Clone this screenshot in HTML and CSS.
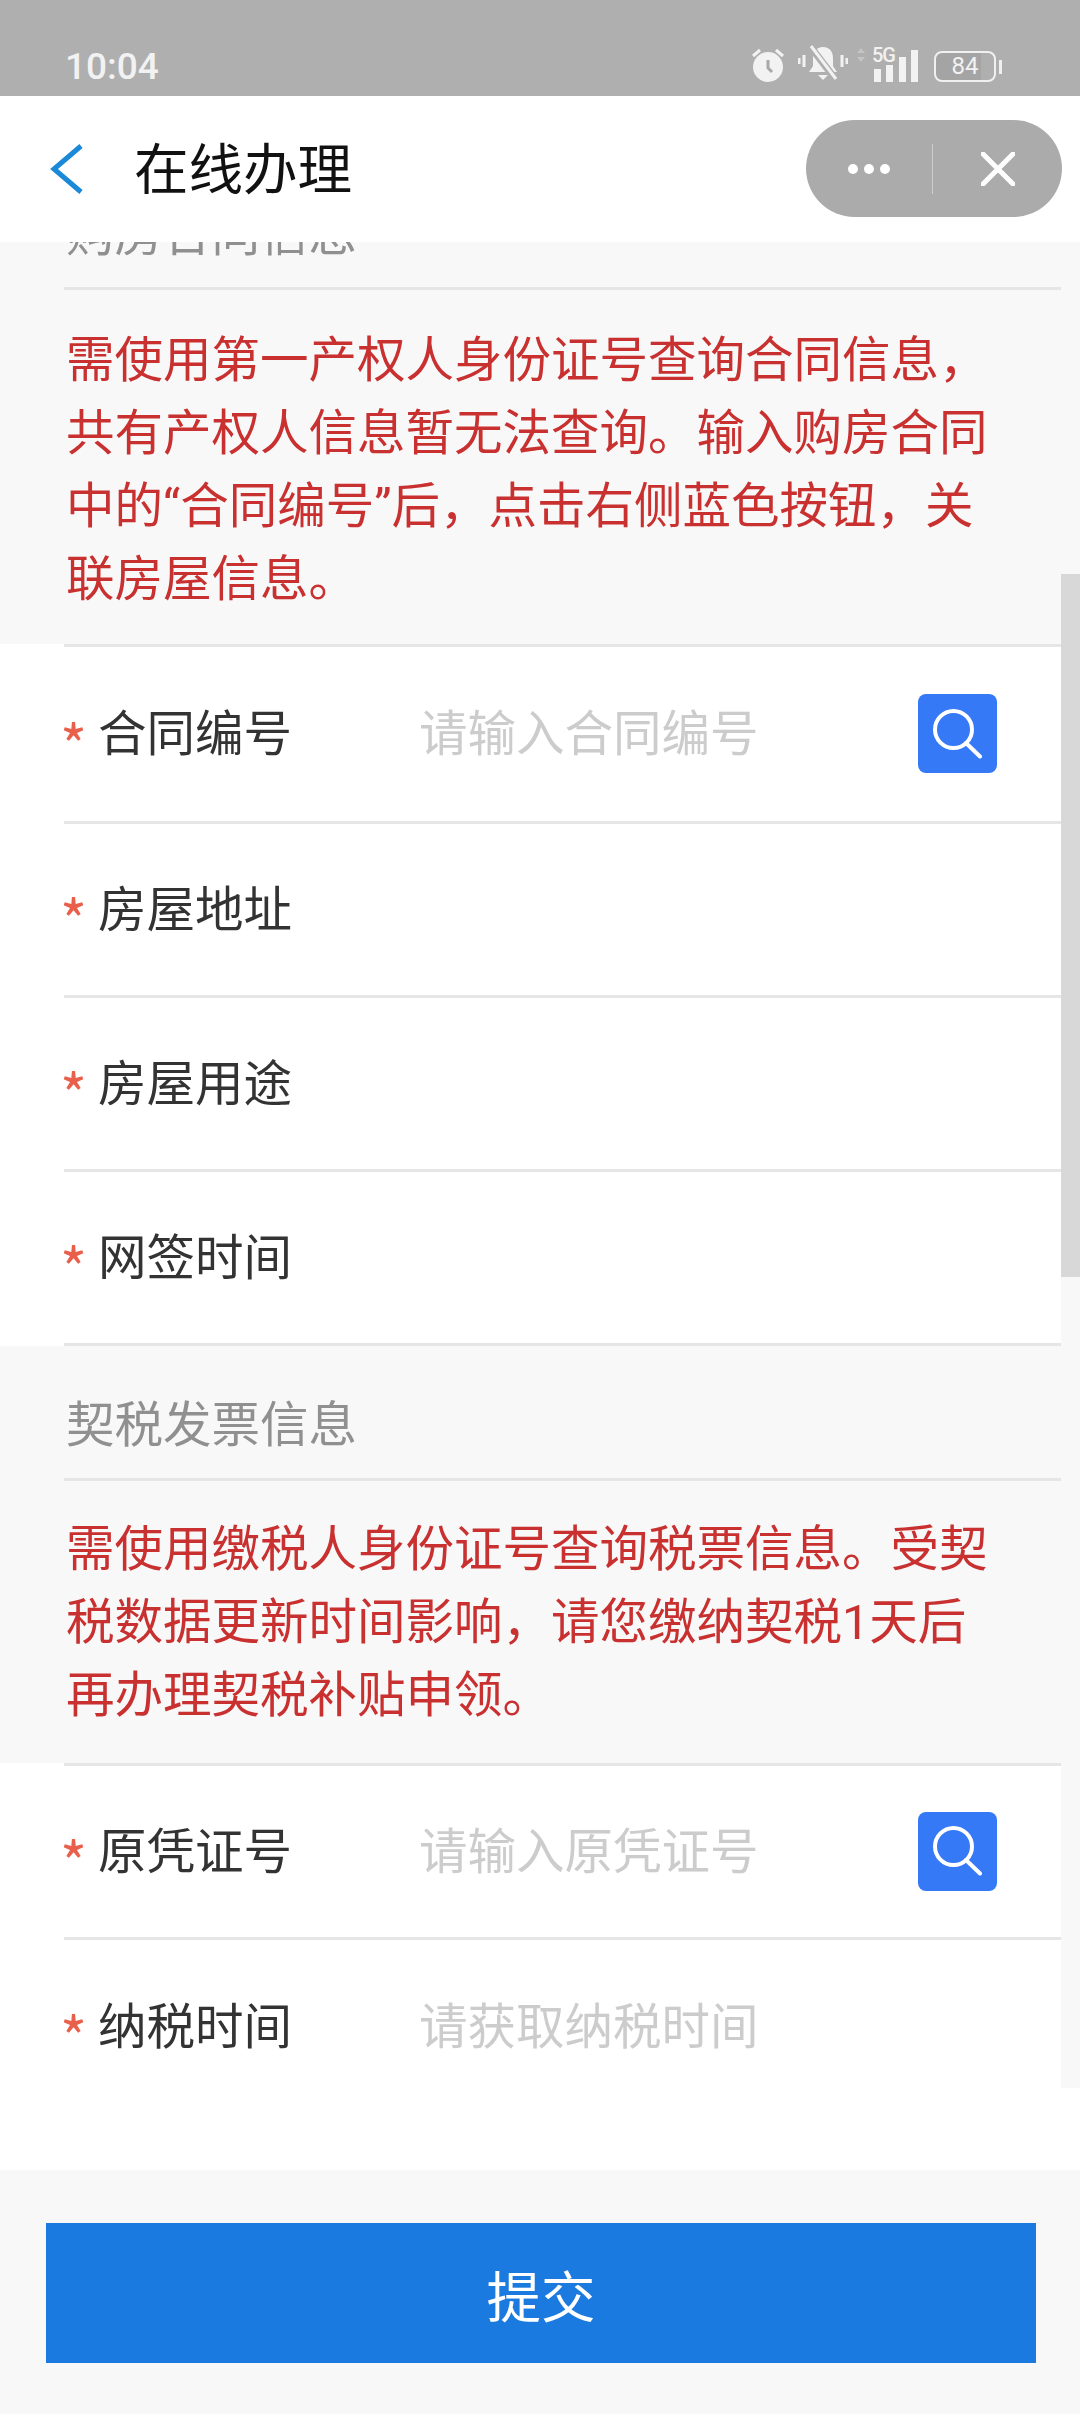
FILE: index.html
```html
<!DOCTYPE html>
<html>
<head>
<meta charset="UTF-8">
<title>在线办理</title>
<link rel="stylesheet" href="styles.css">
</head>
<body>

<div class="statusBar">
	<span class="clock">10:04</span>
	<div class="statusIcons">
		<svg class="alarmIcon" width="34" height="34" viewBox="0 0 34 34">
			<circle cx="17" cy="19" r="15" fill="#f2f2f2"/>
			<path d="M17 12v8l4 4" fill="none" stroke="#a8a8a8" stroke-width="3"/>
			<path d="M2 8l7-6M32 8l-7-6" fill="none" stroke="#f2f2f2" stroke-width="3"/>
		</svg>
		<svg class="bellIcon" width="50" height="38" viewBox="0 0 50 38">
			<path d="M25 3c7 0 10 5 10 11v8l4 6H11l4-6v-8c0-6 3-11 10-11z" fill="#f2f2f2"/>
			<path d="M20 31h10l-5 5z" fill="#f2f2f2"/>
			<path d="M12 2l26 34" stroke="#afafaf" stroke-width="7"/>
			<path d="M13 2l25 33" stroke="#f2f2f2" stroke-width="3"/>
			<path d="M1 14v6M6 11v12M44 11v12M49 14v6" stroke="#f2f2f2" stroke-width="3"/>
		</svg>
		<div class="signal">
			<svg class="dataArrows" width="8" height="14" viewBox="0 0 8 14">
				<path d="M4 0l4 5H0zM4 14l4-5H0z" fill="#c4c4c4"/>
			</svg>
			<span class="netLabel">5G</span>
			<svg width="44" height="32" viewBox="0 0 44 32">
				<rect x="0" y="19" width="7" height="13" fill="#f2f2f2"/>
				<rect x="12" y="15" width="7" height="17" fill="#f2f2f2"/>
				<rect x="25" y="7" width="7" height="25" fill="#f2f2f2"/>
				<rect x="37" y="0" width="7" height="32" fill="#f2f2f2"/>
			</svg>
		</div>
		<div class="battery"><span>84</span></div>
		<i class="batteryTip"></i>
	</div>
</div>

<div class="navBar">
	<svg class="backIcon" width="34" height="50" viewBox="0 0 34 50">
		<path d="M31 2L4 25l27 23" fill="none" stroke="#1a8ad8" stroke-width="5"/>
	</svg>
	<h1 class="navTitle">在线办理</h1>
	<div class="capsule">
		<div class="capsuleDots"><i></i><i></i><i></i></div>
		<div class="capsuleLine"></div>
		<svg width="34" height="34" viewBox="0 0 34 34">
			<path d="M2 2l30 30M32 2L2 32" stroke="#fff" stroke-width="5" stroke-linecap="round"/>
		</svg>
	</div>
</div>

<div class="content">
	<div class="scrollTrack"></div>
	<div class="scrollThumb"></div>

	<div class="sectionHead cut">
		<h2>购房合同信息</h2>
	</div>
	<div class="notice first">
		<p>需使用第一产权人身份证号查询合同信息，</p>
		<p>共有产权人信息暂无法查询。输入购房合同</p>
		<p>中的“合同编号”后，点击右侧蓝色按钮，关</p>
		<p>联房屋信息。</p>
	</div>

	<div class="rows closed">
		<div class="row tall">
			<span class="star">*</span><span class="label">合同编号</span>
			<span class="hint">请输入合同编号</span>
			<a class="searchBtn">
				<svg width="50" height="50" viewBox="0 0 50 50">
					<circle cx="20.5" cy="20.5" r="18.5" fill="none" stroke="#fff" stroke-width="4"/>
					<path d="M33 34l14 13.500" stroke="#fff" stroke-width="4" stroke-linecap="round"/>
				</svg>
			</a>
		</div>
		<div class="row"><span class="star">*</span><span class="label">房屋地址</span></div>
		<div class="row"><span class="star">*</span><span class="label">房屋用途</span></div>
		<div class="row"><span class="star">*</span><span class="label">网签时间</span></div>
	</div>

	<div class="sectionHead">
		<h2>契税发票信息</h2>
	</div>
	<div class="notice">
		<p>需使用缴税人身份证号查询税票信息。受契</p>
		<p>税数据更新时间影响，请您缴纳契税1天后</p>
		<p>再办理契税补贴申领。</p>
	</div>

	<div class="rows">
		<div class="row">
			<span class="star">*</span><span class="label">原凭证号</span>
			<span class="hint">请输入原凭证号</span>
			<a class="searchBtn">
				<svg width="50" height="50" viewBox="0 0 50 50">
					<circle cx="20.5" cy="20.5" r="18.5" fill="none" stroke="#fff" stroke-width="4"/>
					<path d="M33 34l14 13.500" stroke="#fff" stroke-width="4" stroke-linecap="round"/>
				</svg>
			</a>
		</div>
		<div class="row lastRow">
			<span class="star">*</span><span class="label">纳税时间</span>
			<span class="hint">请获取纳税时间</span>
		</div>
	</div>
</div>

<div class="footer">
	<div class="submitBtn">提交</div>
</div>

</body>
</html>
```

FILE: styles.css
```css
* {
  box-sizing: border-box;
}
html, body {
  margin: 0;
  height: 2414px;
  overflow: hidden;
}
body {
  background-color: #f8f8f8;
  font-family: "Noto Sans CJK SC", "Noto Sans", sans-serif;
}
h1, h2, p {
  margin: 0;
  font-weight: 400;
}

/* top grey status bar */
.statusBar {
  height: 96px;
  background-color: #afafaf;
  display: flex;
  justify-content: space-between;
  align-items: flex-end;
  padding: 0 78px 14px 65px;
  color: #f2f2f2;
}
.clock {
  font-family: Roboto, sans-serif;
  font-size: 37px;
  font-weight: 500;
  line-height: 42px;
  margin-bottom: -6px;
}
.statusIcons {
  display: flex;
  align-items: flex-end;
  height: 50px;
}
.alarmIcon {
  margin: 0 13px 0 0;
}
.bellIcon {
  margin: 0 26px 0 0;
}
.signal {
  position: relative;
  width: 44px;
  height: 50px;
  margin-right: 16px;
  display: flex;
  align-items: flex-end;
}
.dataArrows {
  position: absolute;
  left: -17px;
  top: 16px;
}
.netLabel {
  position: absolute;
  left: -2px;
  top: 11px;
  font-family: Roboto, sans-serif;
  font-size: 20px;
  font-weight: 500;
  line-height: 24px;
  letter-spacing: -1px;
}
.battery {
  width: 62px;
  height: 31px;
  border: 2px solid #f0f0f0;
  border-radius: 8px;
  text-align: center;
  font-family: Roboto, sans-serif;
  font-size: 24px;
  line-height: 27px;
  background: linear-gradient(to right, #a4a4a4 78%, transparent 78%);
}
.batteryTip {
  width: 3px;
  height: 14px;
  margin: 0 0 8px 3px;
  background-color: #f0f0f0;
}

/* white title bar */
.navBar {
  height: 146px;
  background-color: #fff;
  display: flex;
  align-items: center;
  position: relative;
  z-index: 2;
}
.backIcon {
  margin-left: 50px;
}
.navTitle {
  margin: 0 0 6px 50px;
  font-size: 54.500px;
  line-height: 70px;
  color: #111;
}
.capsule {
  position: absolute;
  left: 806px;
  top: 24px;
  width: 256px;
  height: 97px;
  border-radius: 49px;
  background-color: #ababab;
  display: flex;
  align-items: center;
}
.capsuleDots {
  display: flex;
  gap: 6px;
  margin-left: 42px;
}
.capsuleDots i {
  width: 10px;
  height: 10px;
  border-radius: 50%;
  background-color: #fff;
}
.capsuleLine {
  width: 1px;
  height: 50px;
  margin-left: 42px;
  background-color: #ccc;
}
.capsule svg {
  margin-left: 48px;
}

/* scrolled form */
.content {
  position: relative;
  height: 1928px;
  overflow: hidden;
}
.scrollTrack {
  position: absolute;
  right: 0;
  top: 0;
  width: 19px;
  height: 1846px;
  background-color: #f8f8f8;
  z-index: 1;
}
.scrollThumb {
  position: absolute;
  right: 0;
  top: 332px;
  width: 19px;
  height: 703px;
  background-color: #d8d8d8;
  z-index: 1;
}
.sectionHead {
  height: 135px;
  margin-left: 64px;
  margin-right: 19px;
  border-bottom: 3px solid #e6e6e6;
  display: flex;
  align-items: flex-end;
  padding-bottom: 25px;
}
.sectionHead.cut {
  height: 48px;
}
.sectionHead h2 {
  font-size: 48.500px;
  line-height: 64px;
  color: #909090;
  margin-left: 2px;
}
.notice {
  padding: 32px 0 31px 66px;
  color: #c93030;
  font-family: Roboto, "Noto Sans CJK SC", sans-serif;
  font-size: 48.500px;
  line-height: 73px;
}
.notice.first {
  padding: 34px 0 28px 66px;
}
.notice p {
  white-space: nowrap;
}
.rows {
  background-color: #fff;
  padding-left: 64px;
}
.rows.closed .row:last-child {
  height: 177px;
  border-bottom: 3px solid #e6e6e6;
}
.row {
  height: 174px;
  margin-right: 19px;
  border-top: 3px solid #e6e6e6;
  display: flex;
  align-items: center;
}
.row.tall {
  height: 177px;
}
.row.lastRow {
  height: 234px;
  padding-bottom: 58px;
}
.star {
  width: 38px;
  font-size: 58px;
  line-height: 48px;
  color: #e8604c;
  margin-left: -4px;
  padding-top: 17px;
}
.label {
  width: 321px;
  font-size: 48.500px;
  line-height: 64px;
  color: #333;
  margin-bottom: 8px;
}
.hint {
  font-size: 48.500px;
  line-height: 64px;
  color: #ccc;
  margin-bottom: 8px;
}
.searchBtn {
  width: 79px;
  height: 79px;
  margin-left: auto;
  margin-right: 64px;
  margin-bottom: 1px;
  border-radius: 8px;
  background-color: #3579f6;
  display: flex;
  align-items: center;
  justify-content: center;
}

/* bottom bar */
.footer {
  height: 244px;
  padding: 53px 44px 0 46px;
}
.submitBtn {
  height: 140px;
  background-color: #1a7adf;
  color: #fff;
  font-size: 54.500px;
  line-height: 142px;
  text-align: center;
}
```
